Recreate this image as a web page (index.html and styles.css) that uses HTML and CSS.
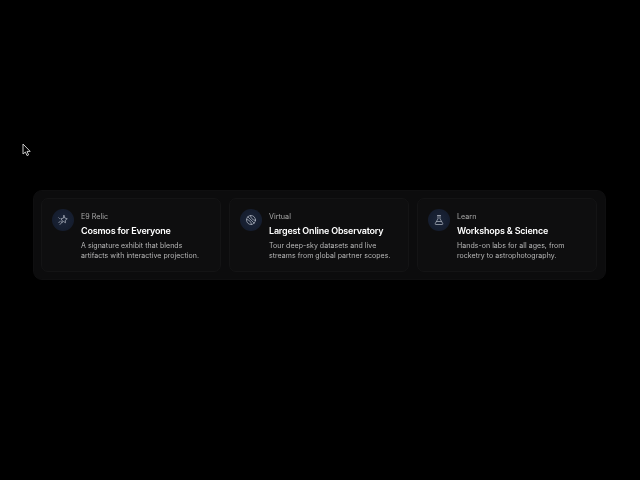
FILE: index.html
```html
<!DOCTYPE html>
<html lang="en">
<head>
<meta charset="utf-8">
<title>Features</title>
<link rel="stylesheet" href="styles.css">
</head>
<body>
<svg class="cursor" width="10" height="14" viewBox="0 0 10 14"><path d="M1 1v10l2.400-2 1.600 3.600 1.600-.7L5 8.400h3.200z" fill="#000" stroke="#c8c8c8" stroke-width="1"/></svg>
<section class="panel">
  <article class="card">
    <div class="icon"><svg viewBox="0 0 24 24"><path d="M14 3l1.500 5 5 1.500-4 3 .5 5-4-2.500-3.500 2 1-4.500L7.500 9.500l4.500-1z"/><path d="M7 14l-3.500 3.500M9.500 17L6 21M5 9L3.500 7.500"/></svg></div>
    <div class="text">
      <p class="label">E9 Relic</p>
      <h3 class="title">Cosmos for Everyone</h3>
      <p class="desc">A signature exhibit that blends<br>artifacts with interactive projection.</p>
    </div>
  </article>
  <article class="card">
    <div class="icon"><svg viewBox="0 0 24 24"><circle cx="12" cy="12" r="9"/><path d="M5.600 5.600l12.800 12.800M3.500 11c4 .5 8 3 9.500 9.500M11 3.500c.5 4 3 8 9.500 9.500"/></svg></div>
    <div class="text">
      <p class="label">Virtual</p>
      <h3 class="title">Largest Online Observatory</h3>
      <p class="desc">Tour deep-sky datasets and live<br>streams from global partner scopes.</p>
    </div>
  </article>
  <article class="card">
    <div class="icon"><svg viewBox="0 0 24 24"><path d="M9 3h6M10 3v6.500L4.500 19a1.500 1.500 0 0 0 1.300 2h12.400a1.500 1.500 0 0 0 1.300-2L14 9.500V3M7.500 15h9"/></svg></div>
    <div class="text">
      <p class="label">Learn</p>
      <h3 class="title">Workshops &amp; Science</h3>
      <p class="desc">Hands-on labs for all ages, from<br>rocketry to astrophotography.</p>
    </div>
  </article>
</section>
</body>
</html>
```
FILE: styles.css
```css
* { box-sizing: border-box; }
html, body { margin: 0; height: 100%; }
body {
  background: #000;
  font-family: Inter, "Liberation Sans", sans-serif;
  padding: 190px 34px 0 33px;
  overflow: hidden;
}
.cursor { position: absolute; left: 22px; top: 143px; }
.panel {
  display: flex;
  gap: 8px;
  padding: 7px 8px 7px 7px;
  height: 90px;
  background: #0c0c0d;
  border: 1px solid #0f0f10;
  border-radius: 9px;
  filter: blur(0.25px);
}
.card {
  flex: 1;
  display: flex;
  gap: 7px;
  padding: 10px;
  background: #0e0e0f;
  border: 1px solid #141415;
  border-radius: 7px;
}
.icon {
  flex: none;
  width: 22px;
  height: 22px;
  border-radius: 50%;
  background: radial-gradient(circle, #1b2539 0%, #151d2e 70%, #121827 100%);
  display: flex;
  align-items: center;
  justify-content: center;
}
.icon svg {
  width: 12px;
  height: 12px;
  fill: none;
  stroke: #b4bac6;
  stroke-width: 1.400;
  stroke-linecap: round;
  stroke-linejoin: round;
}
.text { min-width: 0; }
.label {
  margin: 3px 0 0;
  font-size: 7.200px;
  line-height: 10px;
  color: #a8a8a8;
}
.title {
  margin: 3px 0 0;
  font-size: 9px;
  line-height: 12px;
  font-weight: 600;
  letter-spacing: -0.2px;
  color: #ffffff;
}
.desc {
  margin: 4px 0 0;
  font-size: 7px;
  line-height: 10px;
  letter-spacing: 0.04px;
  color: #b8b8b8;
}
```
